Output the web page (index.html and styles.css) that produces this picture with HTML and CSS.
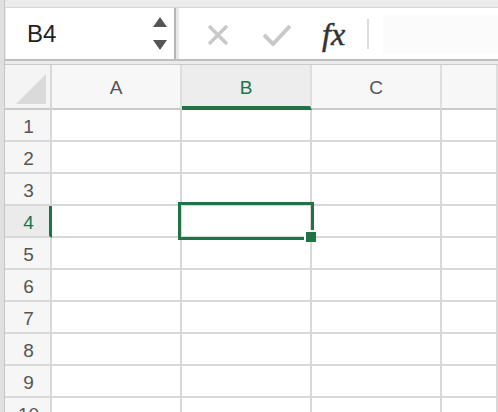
FILE: index.html
```html
<!DOCTYPE html>
<html>
<head>
<meta charset="utf-8">
<link rel="stylesheet" href="styles.css">
</head>
<body>
<div class="app">
  <div class="edge"></div>
  <div class="main">
    <div class="topband"></div>
    <div class="bar">
      <div class="namebox">
        <span class="ref">B4</span>
        <svg class="spin" width="14" height="33" viewBox="0 0 14 33">
          <polygon points="0,10 7,0 14,10" fill="#555"/>
          <polygon points="0,23 14,23 7,33" fill="#555"/>
        </svg>
      </div>
      <div class="gap"></div>
      <div class="formula">
        <svg class="ico-x" width="22" height="22" viewBox="0 0 22 22">
          <path d="M2 2 L20 20 M20 2 L2 20" stroke="#c9c9c9" stroke-width="3.5" fill="none"/>
        </svg>
        <svg class="ico-check" width="28" height="22" viewBox="0 0 28 22">
          <polyline points="1,11 10,20 27,2" stroke="#c9c9c9" stroke-width="4" fill="none"/>
        </svg>
        <span class="fx">fx</span>
        <div class="vsep"></div>
        <div class="input"></div>
      </div>
    </div>
    <div class="sep"></div>
    <div class="sheet">
      <div class="grid">
        <div class="cell corner">
          <svg width="30" height="30" viewBox="0 0 30 30"><polygon points="30,0 30,30 0,30" fill="#dadada"/></svg>
        </div>
        <div class="cell colhead">A</div>
        <div class="cell colhead active">B</div>
        <div class="cell colhead">C</div>
        <div class="cell colhead"></div>

        <div class="cell rowhead">1</div><div class="cell"></div><div class="cell"></div><div class="cell"></div><div class="cell"></div>
        <div class="cell rowhead">2</div><div class="cell"></div><div class="cell"></div><div class="cell"></div><div class="cell"></div>
        <div class="cell rowhead">3</div><div class="cell"></div><div class="cell"></div><div class="cell"></div><div class="cell"></div>
        <div class="cell rowhead active">4</div><div class="cell"></div><div class="cell"></div><div class="cell"></div><div class="cell"></div>
        <div class="cell rowhead">5</div><div class="cell"></div><div class="cell"></div><div class="cell"></div><div class="cell"></div>
        <div class="cell rowhead">6</div><div class="cell"></div><div class="cell"></div><div class="cell"></div><div class="cell"></div>
        <div class="cell rowhead">7</div><div class="cell"></div><div class="cell"></div><div class="cell"></div><div class="cell"></div>
        <div class="cell rowhead">8</div><div class="cell"></div><div class="cell"></div><div class="cell"></div><div class="cell"></div>
        <div class="cell rowhead">9</div><div class="cell"></div><div class="cell"></div><div class="cell"></div><div class="cell"></div>
        <div class="cell rowhead">10</div><div class="cell"></div><div class="cell"></div><div class="cell"></div><div class="cell"></div>
      </div>
      <div class="selection"><div class="handle"></div></div>
    </div>
  </div>
</div>
</body>
</html>
```
FILE: styles.css
```css
* { box-sizing: border-box; }
html, body { margin: 0; padding: 0; }
body {
  width: 498px;
  height: 412px;
  overflow: hidden;
  background: #ffffff;
  font-family: "Liberation Sans", Arial, sans-serif;
}
.app { display: flex; height: 412px; }
.edge {
  width: 5px;
  flex: none;
  background: #e0e0e0;
  border-right: 1px solid #c6c6c6;
}
.main { flex: 1; display: flex; flex-direction: column; min-width: 0; }
.topband {
  height: 8px;
  background: #ececec;
  border-bottom: 1px solid #d6d6d6;
}
.bar {
  height: 51px;
  display: flex;
  background: #e8e8e8;
}
.namebox {
  width: 170px;
  margin-left: 1px;
  background: #fff;
  border-right: 2px solid #b5b5b5;
  display: flex;
  align-items: center;
  justify-content: space-between;
  padding: 0 7px 0 21px;
}
.ref { font-size: 24px; color: #222; }
.gap { width: 3px; }
.formula {
  flex: 1;
  background: #fff;
  display: flex;
  align-items: center;
}
.ico-x { margin-left: 28px; margin-top: 3px; }
.ico-check { margin-left: 34px; margin-top: 3px; }
.fx {
  margin-left: 31px;
  width: 31px;
  font-family: "Liberation Serif", "Times New Roman", serif;
  font-style: italic;
  font-size: 32px;
  line-height: 1;
  color: #333;
  -webkit-text-stroke: 0.5px #333;
}
.vsep {
  margin-left: 14px;
  width: 2px;
  height: 30px;
  background: #dcdcdc;
}
.input {
  margin-left: 14px;
  flex: 1;
  height: 38px;
  background: #fbfbfb;
}
.sep {
  height: 6px;
  background: #ebebeb;
  border-top: 2px solid #bdbdbd;
  border-bottom: 1px solid #cbcbcb;
}
.sheet { position: relative; flex: 1; overflow: hidden; }
.grid {
  display: grid;
  grid-template-columns: 47px 130px 130px 130px 1fr;
  grid-template-rows: 45px repeat(10, 32px);
}
.cell {
  border-right: 2px solid #d8d8d8;
  border-bottom: 2px solid #d8d8d8;
  background: #fff;
}
.corner {
  background: #f4f4f4;
  border-bottom-color: #cacaca;
  display: flex;
  align-items: flex-end;
  justify-content: flex-end;
  padding: 0 4px 4px 0;
}
.colhead {
  background: #f7f7f7;
  border-right-color: #dedede;
  border-bottom-color: #cacaca;
  display: flex;
  align-items: center;
  justify-content: center;
  font-size: 19px;
  color: #555;
  padding-top: 2px;
}
.colhead.active {
  background: #ededed;
  color: #217346;
  border-bottom: 4px solid #217346;
  padding-top: 4px;
}
.rowhead {
  background: #f6f6f6;
  display: flex;
  align-items: center;
  justify-content: center;
  font-size: 19px;
  color: #555;
  padding-top: 3px;
  padding-left: 2px;
}
.rowhead.active {
  background: #ebebeb;
  color: #217346;
  border-right: 3px solid #217346;
  padding-left: 3px;
}
.selection {
  position: absolute;
  left: 173px;
  top: 137px;
  width: 136px;
  height: 38px;
  border: 3px solid #217346;
}
.handle {
  position: absolute;
  left: 123px;
  top: 25px;
  width: 12px;
  height: 12px;
  background: #217346;
  border-left: 2px solid #fff;
  border-top: 2px solid #fff;
}
```
